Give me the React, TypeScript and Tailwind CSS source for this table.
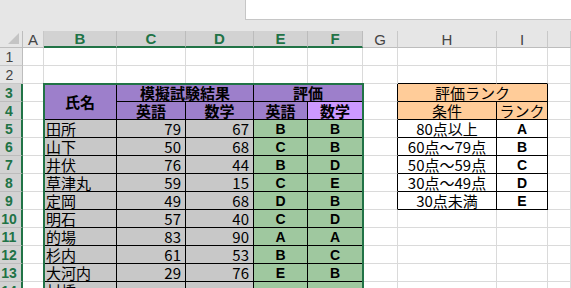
import React from 'react';

const LETTERS = ['A', 'B', 'C', 'D', 'E', 'F', 'G', 'H', 'I', ''];

const DATA: [string, number, number, string, string][] = [
  ['田所', 79, 67, 'B', 'B'],
  ['山下', 50, 68, 'C', 'B'],
  ['井伏', 76, 44, 'B', 'D'],
  ['草津丸', 59, 15, 'C', 'E'],
  ['定岡', 49, 68, 'D', 'B'],
  ['明石', 57, 40, 'C', 'D'],
  ['的場', 83, 90, 'A', 'A'],
  ['杉内', 61, 53, 'B', 'C'],
  ['大河内', 29, 76, 'E', 'B'],
  ['村橋', 0, 0, '', ''],
];

const RANKS: [string, string][] = [
  ['80点以上', 'A'],
  ['60点～79点', 'B'],
  ['50点～59点', 'C'],
  ['30点～49点', 'D'],
  ['30点未満', 'E'],
];

const inT1 = (r: number, c: number) => r >= 3 && c >= 2 && c <= 6;
const inT2 = (r: number, c: number) => r >= 3 && r <= 9 && c >= 8 && c <= 9;
const inT = (r: number, c: number) => inT1(r, c) || inT2(r, c);

const MERGED: Record<string, { span: number; rs: number }> = {
  '3-2': { span: 1, rs: 2 },
  '3-3': { span: 2, rs: 1 },
  '3-5': { span: 2, rs: 1 },
  '3-8': { span: 2, rs: 1 },
};
const COVERED = new Set(['4-2', '3-4', '3-6', '3-9']);

type Content = { text: string; kind: string };

function content(r: number, c: number): Content | null {
  if (r === 3 && c === 2) return { text: '氏名', kind: 'head' };
  if (r === 3 && c === 3) return { text: '模擬試験結果', kind: 'head' };
  if (r === 3 && c === 5) return { text: '評価', kind: 'head' };
  if (r === 4 && c === 3) return { text: '英語', kind: 'head' };
  if (r === 4 && c === 4) return { text: '数学', kind: 'head' };
  if (r === 4 && c === 5) return { text: '英語', kind: 'head' };
  if (r === 4 && c === 6) return { text: '数学', kind: 'active' };
  if (r === 3 && c === 8) return { text: '評価ランク', kind: 'orange' };
  if (r === 4 && c === 8) return { text: '条件', kind: 'orange' };
  if (r === 4 && c === 9) return { text: 'ランク', kind: 'orange' };
  if (r >= 5 && r <= 14 && c >= 2 && c <= 6) {
    const d = DATA[r - 5];
    if (c === 2) return { text: d[0], kind: 'name' };
    if (c === 3) return { text: d[1] ? String(d[1]) : '', kind: 'num' };
    if (c === 4) return { text: d[2] ? String(d[2]) : '', kind: 'num' };
    if (c === 5) return { text: d[3], kind: 'eval' };
    return { text: d[4], kind: 'eval' };
  }
  if (r >= 5 && r <= 9 && c === 8) return { text: RANKS[r - 5][0], kind: 'cond' };
  if (r >= 5 && r <= 9 && c === 9) return { text: RANKS[r - 5][1], kind: 'rank' };
  return null;
}

function kindClass(kind: string) {
  switch (kind) {
    case 'head':
      return 'bg-[#9d7fcb] justify-center font-bold';
    case 'active':
      return 'bg-[#cc99ff] justify-center font-bold';
    case 'orange':
      return 'bg-[#ffcc99] justify-center';
    case 'name':
      return 'bg-[#c8c8c8] justify-start pl-[2px]';
    case 'num':
      return 'bg-[#c8c8c8] justify-end pr-[4px]';
    case 'eval':
      return "bg-[#9fc89f] justify-center font-bold font-['Liberation_Sans',sans-serif] text-[14px]";
    case 'cond':
      return 'justify-center';
    case 'rank':
      return "justify-center font-bold font-['Liberation_Sans',sans-serif] text-[14px]";
    default:
      return '';
  }
}

function CornerCell() {
  return (
    <div className="relative bg-[#e6e6e6] border-r border-b border-r-[#bdbdbd] border-b-[#bdbdbd]">
      <svg className="absolute right-[3px] bottom-[3px]" width="11" height="11" viewBox="0 0 11 11">
        <polygon points="11,0 11,11 0,11" fill="#c4c4c4" />
      </svg>
    </div>
  );
}

function ColHeader({ label, selected }: { label: string; selected: boolean }) {
  return selected ? (
    <div className="flex items-center justify-center bg-[#d2d2d2] border-r border-r-[#bcbcbc] border-b-2 border-b-[#217346] text-[#217346] font-bold text-[15px] leading-[15px] font-['Liberation_Sans',sans-serif]">
      {label}
    </div>
  ) : (
    <div className="flex items-center justify-center bg-[#e6e6e6] border-r border-b border-r-[#c8c8c8] border-b-[#bdbdbd] text-[#444] text-[15px] leading-[15px] font-['Liberation_Sans',sans-serif]">
      {label}
    </div>
  );
}

function RowHeader({ n }: { n: number }) {
  return n >= 3 ? (
    <div className="flex items-center justify-center pr-[3px] bg-[#d2d2d2] border-r-2 border-r-[#217346] border-b border-b-[#bcbcbc] text-[#217346] font-bold text-[14px] leading-[16px] font-['Liberation_Sans',sans-serif]">
      {n}
    </div>
  ) : (
    <div className="flex items-center justify-center pr-[3px] bg-[#e6e6e6] border-r border-b border-r-[#bdbdbd] border-b-[#c8c8c8] text-[#444] text-[14px] leading-[16px] font-['Liberation_Sans',sans-serif]">
      {n}
    </div>
  );
}

export default function App() {
  const cells: React.ReactNode[] = [];

  cells.push(<CornerCell key="corner" />);
  LETTERS.forEach((l, i) => {
    cells.push(<ColHeader key={'h' + i} label={l} selected={i >= 1 && i <= 5} />);
  });

  for (let r = 1; r <= 14; r++) {
    cells.push(<RowHeader key={'r' + r} n={r} />);
    for (let c = 1; c <= 10; c++) {
      const key = r + '-' + c;
      if (COVERED.has(key)) continue;
      const m = MERGED[key] ?? { span: 1, rs: 1 };
      const cEnd = c + m.span - 1;
      const rEnd = r + m.rs - 1;
      const rBlack = inT(r, c) || inT(r, cEnd + 1);
      const bBlack = inT(r, c) || inT(rEnd + 1, c);
      const ct = content(r, c);
      const spanCls = m.span === 2 ? 'col-span-2' : '';
      const rsCls = m.rs === 2 ? 'row-span-2' : '';
      cells.push(
        <div
          key={key}
          className={[
            'flex items-center whitespace-nowrap border-r border-b leading-[16px]',
            rBlack ? 'border-r-black' : 'border-r-[#dadada]',
            bBlack ? 'border-b-black' : 'border-b-[#dadada]',
            spanCls,
            rsCls,
            ct ? kindClass(ct.kind) : '',
          ].join(' ')}
        >
          {ct?.text}
        </div>
      );
    }
  }

  return (
    <div className="relative w-[571px] h-[288px] overflow-hidden bg-white font-['Noto_Sans_CJK_JP',sans-serif] text-[15px] text-black">
      <div className="h-[31px] bg-[#e6e6e6] flex items-start">
        <div className="w-[245px]" />
        <div className="flex-1 h-[20px] bg-white border-l border-b border-[#c6c6c6]" />
      </div>
      <div className="grid grid-cols-[23px_21px_73px_69px_68px_54px_55px_35px_99px_51px_23px] grid-rows-[17px_repeat(14,18px)]">
        {cells}
      </div>
      <div className="absolute left-[43px] top-[83px] w-[321px] h-[240px] border-2 border-[#217346] pointer-events-none" />
    </div>
  );
}
